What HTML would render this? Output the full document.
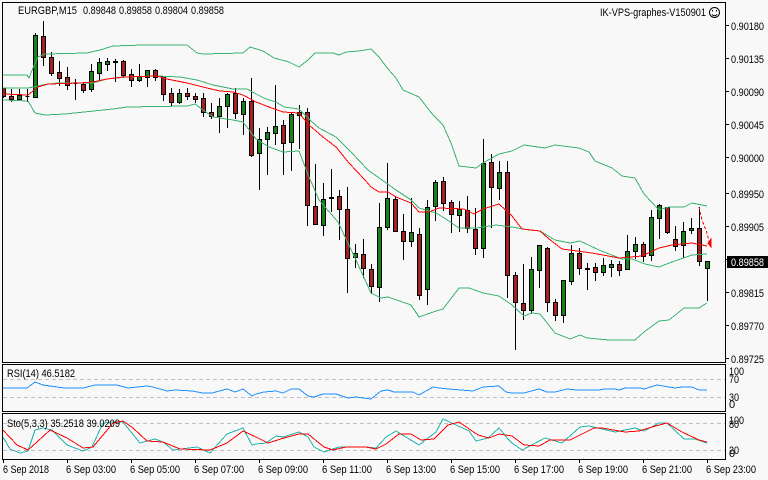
<!DOCTYPE html>
<html><head><meta charset="utf-8"><title>EURGBP,M15</title>
<style>
html,body{margin:0;padding:0;background:#f8f8f8;width:768px;height:480px;overflow:hidden}
svg{display:block}
text{font-family:"Liberation Sans",sans-serif;font-size:11px;fill:#000}
</style></head><body>
<svg width="768" height="480" viewBox="0 0 768 480" xmlns="http://www.w3.org/2000/svg">
<rect width="768" height="480" fill="#f8f8f8"/>
<g fill="none" stroke-width="1" shape-rendering="crispEdges">
<!-- levels -->
<path d="M3 379.5H725M3 397.5H725M3 423.5H725M3 450.5H725" stroke="#c0c0c0" stroke-dasharray="4 3"/>
<!-- wicks -->
<path stroke="#000" d="M3.5 88V98M11.5 89V102M19.5 89V100M27.5 89V102M35.5 33V98M43.5 21V66M51.5 52V76M59.5 61V86M67.5 67V90M75.5 79V100M83.5 83V93M91.5 64V92M99.5 58V81M107.5 58V71M115.5 59V82M123.5 60V78M131.5 69V87M139.5 64V82M147.5 70V87M155.5 69V81M163.5 76V101M171.5 88V106M179.5 89V104M187.5 88V100M195.5 93V103M203.5 93V117M211.5 103V119M219.5 98V133M227.5 93V128M235.5 88V119M243.5 98V135M251.5 78V157M259.5 128V190M267.5 127V175M275.5 85V145M283.5 120V175M291.5 113V171M299.5 105V149M307.5 108V226M315.5 164V225M323.5 183V236M331.5 169V212M339.5 190V240M347.5 187V293M355.5 244V268M363.5 239V278M371.5 264V294M379.5 203V302M387.5 163V230M395.5 196V232M403.5 214V260M411.5 198V247M419.5 228V300M427.5 200V305M435.5 180V221M443.5 177V211M451.5 200V233M459.5 201V232M467.5 196V233M475.5 208V255M483.5 139V258M491.5 154V228M499.5 161V200M507.5 161V298M515.5 272V350M523.5 264V320M531.5 257V314M539.5 245V288M547.5 247V312M555.5 299V321M563.5 280V323M571.5 245V285M579.5 248V275M587.5 263V290M595.5 263V281M603.5 258V276M611.5 260V277M619.5 261V276M627.5 235V270M635.5 237V259M643.5 242V262M651.5 210V261M659.5 204V239M667.5 207V234M675.5 226V251M683.5 222V258M691.5 218V234M699.5 207V266M707.5 261V301"/>
<!-- red bodies -->
<path stroke="#000" fill="#a52020" d="M1.5 88.5h4v8h-4zM9.5 96.5h4v3h-4zM41.5 36.5h4v21h-4zM49.5 57.5h4v16h-4zM57.5 72.5h4v6h-4zM65.5 77.5h4v8h-4zM81.5 84.5h4v6h-4zM121.5 61.5h4v14h-4zM129.5 74.5h4v6h-4zM153.5 70.5h4v7h-4zM161.5 76.5h4v18h-4zM169.5 93.5h4v9h-4zM185.5 93.5h4v3h-4zM193.5 96.5h4v3h-4zM201.5 98.5h4v14h-4zM209.5 112.5h4v4h-4zM233.5 93.5h4v20h-4zM249.5 101.5h4v54h-4zM281.5 125.5h4v18h-4zM305.5 112.5h4v93h-4zM313.5 206.5h4v18h-4zM337.5 196.5h4v13h-4zM345.5 209.5h4v49h-4zM361.5 254.5h4v14h-4zM369.5 269.5h4v17h-4zM393.5 199.5h4v32h-4zM401.5 231.5h4v10h-4zM417.5 234.5h4v61h-4zM441.5 181.5h4v22h-4zM449.5 202.5h4v12h-4zM465.5 210.5h4v18h-4zM473.5 229.5h4v19h-4zM489.5 162.5h4v25h-4zM505.5 172.5h4v103h-4zM513.5 275.5h4v27h-4zM521.5 303.5h4v7h-4zM545.5 248.5h4v54h-4zM553.5 302.5h4v13h-4zM577.5 253.5h4v15h-4zM593.5 267.5h4v5h-4zM617.5 264.5h4v6h-4zM641.5 244.5h4v12h-4zM665.5 207.5h4v25h-4zM673.5 239.5h4v7h-4zM697.5 228.5h4v33h-4z"/>
<!-- green bodies -->
<path stroke="#000" fill="#1a801a" d="M17.5 95.5h4v4h-4zM33.5 35.5h4v62h-4zM89.5 71.5h4v18h-4zM97.5 62.5h4v11h-4zM105.5 61.5h4v3h-4zM137.5 76.5h4v4h-4zM145.5 70.5h4v7h-4zM177.5 93.5h4v9h-4zM217.5 106.5h4v10h-4zM225.5 94.5h4v12h-4zM241.5 101.5h4v13h-4zM257.5 139.5h4v14h-4zM265.5 132.5h4v7h-4zM273.5 126.5h4v7h-4zM289.5 114.5h4v28h-4zM297.5 112.5h4v3h-4zM321.5 199.5h4v26h-4zM353.5 253.5h4v4h-4zM377.5 227.5h4v60h-4zM385.5 198.5h4v29h-4zM409.5 232.5h4v9h-4zM425.5 207.5h4v82h-4zM433.5 182.5h4v24h-4zM457.5 209.5h4v6h-4zM481.5 163.5h4v85h-4zM497.5 172.5h4v16h-4zM529.5 269.5h4v41h-4zM537.5 245.5h4v25h-4zM561.5 280.5h4v35h-4zM569.5 253.5h4v28h-4zM601.5 265.5h4v7h-4zM609.5 264.5h4v3h-4zM625.5 251.5h4v18h-4zM633.5 244.5h4v7h-4zM649.5 217.5h4v38h-4zM657.5 205.5h4v13h-4zM681.5 231.5h4v14h-4zM689.5 228.5h4v2h-4zM705.5 261.5h4v7h-4z"/>
<!-- dojis -->
<path fill="#000" stroke="#000" d="M25.5 96.5h4v0zM73.5 83.5h4v0zM113.5 61.5h4v1h-4zM329.5 197.5h4v1h-4zM585.5 268.5h4v1h-4z"/>
<!-- Bollinger -->
<polyline stroke="#3cb371" points="3,75 27,75 29,78 33,68 38,57 45,54 87,53 100,50 113,46 143,45 187,45 197,53 203,54 243,53 250,47 263,51 274,58 289,62 299,67 308,60 315,53 333,53 339,55 346,52 359,51 371,49 379,57 388,69 396,78 403,90 419,97 433,115 443,125 451,143 459,166 476,168 483,163 499,154 512,151 524,145 545,148 555,145 579,148 589,152 595,161 612,168 622,176 635,178 644,194 659,210 669,207 684,207 692,203 707,206"/>
<polyline stroke="#3cb371" points="3,88 28,88 33,87 42,85 57,83 80,83 93,83 107,79 127,77 157,76 180,77 197,80 213,85 233,89 247,89 256,94 266,99 276,102 284,107 299,109 311,121 319,128 336,137 351,152 368,170 382,180 396,190 411,200 419,208 436,213 446,219 459,228 476,228 496,225 512,227 529,230 540,231 555,240 570,243 580,241 599,250 622,259 632,259 645,264 659,267 672,262 692,255 707,254"/>
<polyline stroke="#3cb371" points="3,100 28,101 35,113 45,115 65,114 113,109 127,107 187,106 195,104 203,110 213,117 233,120 243,122 256,139 269,147 283,152 299,151 309,177 319,200 338,222 356,260 371,293 381,298 388,297 411,305 419,317 436,311 443,309 459,288 469,288 483,293 499,296 512,305 524,316 532,313 540,314 555,333 570,339 580,335 587,338 609,340 635,340 644,332 659,321 669,320 684,308 699,308 707,303"/>
<!-- MA -->
<polyline stroke="#ff0000" points="3,94 28,95 38,87 48,84 80,83 93,82 107,79 123,77 157,76 167,79 187,83 207,88 220,91 233,92 243,95 256,102 269,107 283,112 299,113 309,125 323,137 336,147 349,163 365,180 371,187 379,192 388,192 396,197 411,203 419,212 429,212 439,208 464,209 474,214 483,209 499,204 512,216 522,229 540,231 549,239 562,249 592,253 619,258 642,256 659,248 672,245 692,243 707,246"/>
<polyline stroke="#ff0000" stroke-dasharray="3 2" points="699,207 702,220 707,233 710,245"/>
<path fill="#ff0000" stroke="#ff0000" d="M708 243L711 239L711 247Z"/>
<!-- RSI -->
<polyline stroke="#1e90ff" points="3,388 27,388 35,382 43,385 57,387 65,388 83,388 95,385 117,385 128,388 147,386 153,387 167,391 175,390 192,391 203,393 212,393 227,389 235,392 243,389 252,396 256,394 264,392 276,391 283,393 291,389 299,389 308,396 314,397 323,394 336,394 348,398 356,397 371,399 381,391 388,390 394,392 413,392 419,395 433,387 439,388 449,389 473,391 483,387 499,386 506,392 512,393 524,393 539,389 547,392 555,392 567,389 577,390 599,390 604,389 615,389 619,390 625,388 640,388 644,389 657,385 675,388 682,387 692,387 699,390 707,390"/>
<!-- Stochastic -->
<polyline stroke="#20b2aa" points="3,437 10,449 20,453 28,451 35,430 43,428 52,430 67,445 83,451 92,447 103,423 113,422 123,422 140,443 155,439 163,442 173,450 197,447 210,453 227,434 243,428 252,445 256,444 266,443 276,436 283,437 299,432 308,437 314,447 324,452 339,447 366,447 376,448 386,437 396,431 419,445 436,432 443,419 469,431 476,441 488,438 499,428 508,439 512,443 522,450 545,438 562,443 580,427 589,426 615,432 635,428 644,431 659,423 667,423 684,439 695,439 707,443"/>
<polyline stroke="#ff0000" points="3,430 17,445 28,450 37,442 50,430 67,438 83,448 93,447 113,423 123,421 133,428 147,441 163,442 180,449 210,450 227,443 243,431 256,437 268,443 284,438 299,434 308,434 324,447 333,450 346,447 366,447 376,449 386,444 399,434 411,434 421,440 434,439 448,425 459,422 478,435 489,438 499,434 512,436 524,445 539,446 550,440 570,440 580,435 594,428 602,428 625,432 639,431 652,427 667,423 682,432 699,440 707,442"/>
</g>
<!-- frame covers -->
<rect x="0" y="0" width="2" height="480" fill="#f8f8f8"/>
<g fill="none" stroke="#000" shape-rendering="crispEdges">
<path d="M2.5 2.5H725.5V362.5H2.5ZM2.5 364.5H725.5V411.5H2.5ZM2.5 413.5H725.5V459.5H2.5Z"/>
<path d="M726 25.5h3M726 58.5h3M726 91.5h3M726 124.5h3M726 157.5h3M726 193.5h3M726 226.5h3M726 259.5h3M726 292.5h3M726 325.5h3M726 358.5h3"/>
<path d="M3.5 460v3M67.5 460v3M131.5 460v3M195.5 460v3M259.5 460v3M323.5 460v3M387.5 460v3M451.5 460v3M515.5 460v3M579.5 460v3M643.5 460v3M707.5 460v3"/>
</g>
<!-- top texts -->
<text x="18" y="14" textLength="59" lengthAdjust="spacingAndGlyphs">EURGBP,M15</text>
<text x="83" y="14" textLength="33" lengthAdjust="spacingAndGlyphs">0.89848</text>
<text x="119" y="14" textLength="33" lengthAdjust="spacingAndGlyphs">0.89858</text>
<text x="155" y="14" textLength="33" lengthAdjust="spacingAndGlyphs">0.89804</text>
<text x="191" y="14" textLength="33" lengthAdjust="spacingAndGlyphs">0.89858</text>
<text x="600" y="16" textLength="106" lengthAdjust="spacingAndGlyphs">IK-VPS-graphes-V150901</text>
<g fill="none" stroke="#000" shape-rendering="geometricPrecision">
<circle cx="714.5" cy="12.5" r="5"/>
<path d="M712 14.5q2.5 2.5 5 0" stroke-width=".9"/>
</g>
<rect x="712" y="10" width="1" height="1.5" fill="#000"/><rect x="716" y="10" width="1" height="1.5" fill="#000"/>
<!-- price labels -->
<g>
<text x="731" y="30" textLength="33" lengthAdjust="spacingAndGlyphs">0.90180</text>
<text x="731" y="63" textLength="33" lengthAdjust="spacingAndGlyphs">0.90135</text>
<text x="731" y="96" textLength="33" lengthAdjust="spacingAndGlyphs">0.90090</text>
<text x="731" y="129" textLength="33" lengthAdjust="spacingAndGlyphs">0.90045</text>
<text x="731" y="162" textLength="33" lengthAdjust="spacingAndGlyphs">0.90000</text>
<text x="731" y="198" textLength="33" lengthAdjust="spacingAndGlyphs">0.89950</text>
<text x="731" y="231" textLength="33" lengthAdjust="spacingAndGlyphs">0.89905</text>
<text x="731" y="297" textLength="33" lengthAdjust="spacingAndGlyphs">0.89815</text>
<text x="731" y="330" textLength="33" lengthAdjust="spacingAndGlyphs">0.89770</text>
<text x="731" y="363" textLength="33" lengthAdjust="spacingAndGlyphs">0.89725</text>
</g>
<rect x="727" y="256" width="41" height="12" fill="#000"/>
<text x="731" y="266" textLength="33" lengthAdjust="spacingAndGlyphs" style="fill:#fff">0.89858</text>
<!-- indicator labels -->
<text x="7" y="377" textLength="68" lengthAdjust="spacingAndGlyphs">RSI(14) 46.5182</text>
<text x="7" y="427" textLength="113" lengthAdjust="spacingAndGlyphs">Sto(5,3,3) 35.2518 39.0209</text>
<text x="729" y="375" textLength="15" lengthAdjust="spacingAndGlyphs">100</text>
<text x="729" y="383" textLength="10" lengthAdjust="spacingAndGlyphs">70</text>
<text x="729" y="401" textLength="10" lengthAdjust="spacingAndGlyphs">30</text>
<text x="729" y="408">0</text>
<text x="729" y="424" textLength="15" lengthAdjust="spacingAndGlyphs">100</text>
<text x="729" y="428" textLength="10" lengthAdjust="spacingAndGlyphs">80</text>
<text x="729" y="454" textLength="10" lengthAdjust="spacingAndGlyphs">20</text>
<text x="729" y="457">0</text>
<!-- time labels -->
<text x="3" y="473" textLength="46" lengthAdjust="spacingAndGlyphs">6 Sep 2018</text>
<text x="66" y="473" textLength="50" lengthAdjust="spacingAndGlyphs">6 Sep 03:00</text>
<text x="130" y="473" textLength="50" lengthAdjust="spacingAndGlyphs">6 Sep 05:00</text>
<text x="194" y="473" textLength="50" lengthAdjust="spacingAndGlyphs">6 Sep 07:00</text>
<text x="258" y="473" textLength="50" lengthAdjust="spacingAndGlyphs">6 Sep 09:00</text>
<text x="322" y="473" textLength="50" lengthAdjust="spacingAndGlyphs">6 Sep 11:00</text>
<text x="386" y="473" textLength="50" lengthAdjust="spacingAndGlyphs">6 Sep 13:00</text>
<text x="450" y="473" textLength="50" lengthAdjust="spacingAndGlyphs">6 Sep 15:00</text>
<text x="514" y="473" textLength="50" lengthAdjust="spacingAndGlyphs">6 Sep 17:00</text>
<text x="578" y="473" textLength="50" lengthAdjust="spacingAndGlyphs">6 Sep 19:00</text>
<text x="642" y="473" textLength="50" lengthAdjust="spacingAndGlyphs">6 Sep 21:00</text>
<text x="706" y="473" textLength="50" lengthAdjust="spacingAndGlyphs">6 Sep 23:00</text>
</svg>
</body></html>
